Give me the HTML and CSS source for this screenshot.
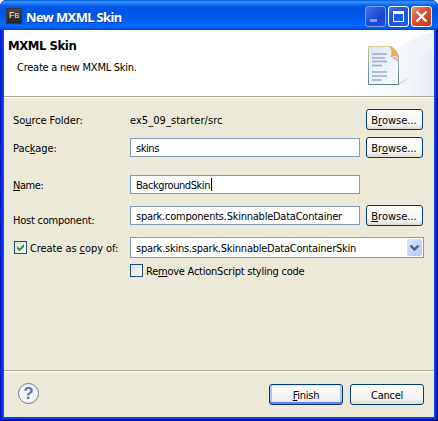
FILE: index.html
```
<!DOCTYPE html>
<html lang="en">
<head>
<meta charset="utf-8">
<title>New MXML Skin</title>
<link rel="stylesheet" href="styles.css">
</head>
<body>
<div class="window">
  <div class="titlebar">
    <span class="app-icon">F<small>B</small></span>
    <span class="window-title">New MXML Skin</span>
    <div class="controls">
      <span class="control minimize"><svg width="19" height="19"><path d="M4 12h7v3H4z" fill="#7f9ff1"/></svg></span>
      <span class="control"><svg width="19" height="19"><path d="M4 4h11v11H4zM5 7v7h9V7z" fill="#fff" fill-rule="evenodd"/></svg></span>
      <span class="control close"><svg width="19" height="19"><path d="M4.5 4.5l10 10M14.5 4.5l-10 10" stroke="#fff" stroke-width="2.3"/></svg></span>
    </div>
  </div>
  <div class="header">
    <div class="heading">
      <h1>MXML Skin</h1>
      <p>Create a new MXML Skin.</p>
    </div>
    <svg class="banner" width="80" height="66" viewBox="0 0 80 66">
      <defs>
        <linearGradient id="haze" x1="0" y1="0" x2="1" y2="0"><stop offset="0" stop-color="#fff"/><stop offset="1" stop-color="#e3eaf7"/></linearGradient>
        <linearGradient id="paper" x1="0" y1="0" x2="1" y2="1"><stop offset="0" stop-color="#dbe6f6"/><stop offset="1" stop-color="#fbfdff"/></linearGradient>
        <linearGradient id="edge" x1="0" y1="0" x2="0" y2="1"><stop offset="0" stop-color="#d9ca9b"/><stop offset=".5" stop-color="#8fa5a5"/><stop offset="1" stop-color="#5e8289"/></linearGradient>
        <linearGradient id="shade" x1="0" y1="0" x2="1" y2="0"><stop offset="0" stop-color="#c4c3d2"/><stop offset="1" stop-color="#e9edf7" stop-opacity="0"/></linearGradient>
      </defs>
      <path d="M0 66Q18 22 80 1V66z" fill="url(#haze)" opacity=".65"/>
      <path d="M36 66Q54 32 80 21V66z" fill="url(#haze)" opacity=".6"/>
      <path d="M44 54L61 42L52 51L44 55z" fill="url(#shade)"/>
      <path d="M14.500 16.500H36L44.500 27V54.500H14.500z" fill="url(#paper)" stroke="url(#edge)"/>
      <path d="M36 16Q43 19 45 28Q42 24 37 27Q39 22 36 16z" fill="#efac4f" stroke="#d99a4b" stroke-width=".5"/>
      <path d="M38 28Q42 25 44 29V32z" fill="#bec8d8"/>
      <path d="M18 24h15M18 28h13M18 31.500h15M18 35.500h10M18 42h15M18 46h15M18 50h10" stroke="#9caccd" stroke-width="1.500"/>
    </svg>
  </div>
  <div class="form">
    <div class="row source">
      <label class="label"><span class="text">So<u>u</u>rce Folder:</span></label>
      <span class="value"><span class="text path">ex5_09_starter/src</span></span>
      <span class="button browse"><span class="text">B<u>r</u>owse...</span></span>
    </div>
    <div class="row package">
      <label class="label"><span class="text">Pac<u>k</u>age:</span></label>
      <span class="field"><span class="text typed">skins</span></span>
      <span class="button browse"><span class="text">Br<u>o</u>wse...</span></span>
    </div>
    <div class="row name">
      <label class="label"><span class="text short"><u>N</u>ame:</span></label>
      <span class="field"><span class="text typed">BackgroundSkin</span><i class="caret"></i></span>
    </div>
    <div class="row host">
      <label class="label"><span class="text component">Host component:</span></label>
      <span class="field"><span class="text">spark.components.SkinnableDataContainer</span></span>
      <span class="button browse"><span class="text"><u>B</u>rowse...</span></span>
    </div>
    <div class="row copy">
      <label class="label"><span class="checkbox"><svg width="11" height="11"><path d="M2 4l2.500 2.500L9 2v3L4.500 9.300L2 7z" fill="#21a121"/></svg></span><span class="text">Create as <u>c</u>opy of:</span></label>
      <span class="field combo"><span class="text">spark.skins.spark.SkinnableDataContainerSkin</span>
        <span class="arrow"><svg width="15" height="17"><path d="M3.500 6.500l4 4l4-4" fill="none" stroke="#4d6185" stroke-width="2.400"/></svg></span>
      </span>
    </div>
    <div class="row remove">
      <span class="checkbox"></span><span class="text">Re<u>m</u>ove ActionScript styling code</span>
    </div>
  </div>
  <div class="footer">
    <span class="help">?</span>
    <span class="button action default"><span class="text"><u>F</u>inish</span></span>
    <span class="button action"><span class="text">Cancel</span></span>
  </div>
</div>
</body>
</html>
```
FILE: styles.css
```
* { box-sizing: border-box; }
body {
  margin: 0;
  background: #fff;
  color: #000;
  font: 11px/13px "DejaVu Sans Condensed", "DejaVu Sans", sans-serif;
  font-stretch: condensed;
}
svg { display: block; }
span { white-space: nowrap; }
u { text-decoration: underline; text-underline-offset: 1px; text-decoration-thickness: 1px; text-decoration-skip-ink: none; }
.window {
  width: 438px;
  height: 421px;
  display: flex;
  flex-direction: column;
  padding: 0 4px 4px;
  border-radius: 7px 7px 0 0;
  overflow: hidden;
  background: #0831d9;
  box-shadow: inset 1px 0 #0019cf, inset -1px 0 #00138c, inset 0 -1px #00138c, inset 3px 0 #0831d9, inset -2px 0 #001ea0, inset 0 -2px #001ea0, inset 4px 0 #0855e8, inset -4px 0 #0545e4, inset 0 -4px #0545e4;
}
.titlebar {
  height: 30px;
  flex: none;
  margin: 0 -4px;
  padding: 0 6px;
  display: flex;
  align-items: center;
  background: linear-gradient(#0058d8 0, #3c96ff 2px, #1475f5 4px, #0356e3 7px, #0054e3 12px, #005cf0 18px, #0066ff 24px, #0066fc 27px, #0045cf 30px);
}
.app-icon {
  width: 16px;
  height: 16px;
  margin: 2px 4px 0 0;
  display: flex;
  align-items: baseline;
  justify-content: center;
  background: linear-gradient(#4c4645, #262223);
  border: 1px solid #383334;
  color: #eee;
  font: 9px/13px "Liberation Sans", sans-serif;
}
.app-icon small { font-size: 7px; }
.window-title {
  color: #fff;
  font: bold 13px/18px "Noto Sans", sans-serif;
  letter-spacing: -0.65px;
  text-shadow: 1px 1px #10379c;
  margin-top: 4px;
}
.controls { display: flex; gap: 2px; margin: 3px 0 0 auto; }
.control {
  width: 21px;
  height: 21px;
  border: 1px solid #fff;
  border-radius: 3px;
  background: radial-gradient(circle at 80% 90%, #1862f0, #2451d9 65%, #4d7df0);
}
.minimize { border-color: #799bee; background: linear-gradient(135deg, #4670e6, #1a45ce 65%, #1d55e0); }
.close { background: linear-gradient(135deg, #f09578, #e0502e 40%, #c53a16); }
.header {
  height: 68px;
  flex: none;
  display: flex;
  justify-content: space-between;
  background: #fff;
  border-bottom: 1px solid #fff;
  box-shadow: inset 0 -1px #aca899;
}
.heading { padding: 8px 0 0 4px; }
h1 { margin: 0; font: bold 13px/16px "DejaVu Sans Condensed", "DejaVu Sans", sans-serif; font-stretch: condensed; letter-spacing: -0.45px; }
p { margin: 7px 0 0 9px; letter-spacing: -0.25px; }
.form { flex: 1; background: #ece9d8; padding: 11px 10px 0 9px; }
.text { padding-top: 1px; letter-spacing: -0.24px; }
.row { height: 21px; display: flex; align-items: center; }
.package { margin-top: 7px; }
.name { margin-top: 16px; }
.host { margin-top: 10px; }
.copy { margin-top: 11px; }
.remove { margin: 6px 0 0 117px; height: 13px; }
.label { width: 117px; display: flex; align-items: center; }
.label .text { letter-spacing: -0.08px; }
.label .short { letter-spacing: -0.45px; }
.label .component { letter-spacing: -0.24px; }
.host .label { padding-top: 9px; }
.value, .field { width: 230px; display: flex; }
.path { letter-spacing: 0.06px; }
.field {
  height: 19px;
  padding: 0 0 0 5px;
  align-items: center;
  background: #fff;
  border: 1px solid #7f9db9;
}
.typed { letter-spacing: -0.43px; }
.caret { width: 1px; height: 13px; background: #000; margin-left: 1px; }
.button {
  height: 21px;
  display: flex;
  align-items: center;
  justify-content: center;
  border: 1px solid #003c74;
  border-radius: 3px;
  background: linear-gradient(#fff, #f4f3ee 75%, #dedbd0);
}
.browse { width: 57px; margin-left: 6px; }
.browse .text { letter-spacing: 0; margin-right: 1px; }
.checkbox {
  width: 13px;
  height: 13px;
  flex: none;
  margin-right: 3px;
  border: 1px solid #1c5180;
  background: linear-gradient(135deg, #dcdcd7, #fff);
}
.label .checkbox { margin-left: 1px; }
.combo { width: 294px; height: 21px; padding-right: 1px; }
.arrow {
  width: 15px;
  height: 17px;
  margin-left: auto;
  border-radius: 2px;
  background: linear-gradient(135deg, #dce6fd, #b4c8f6);
}
.footer {
  height: 47px;
  flex: none;
  display: flex;
  align-items: flex-start;
  padding: 12px 10px 0 14px;
  background: #ece9d8;
  border-top: 1px solid #aca899;
  box-shadow: inset 0 1px #fff;
  gap: 7px;
}
.footer .button { margin-top: 1px; }
.help {
  width: 21px;
  height: 21px;
  margin-right: auto;
  border: 1.500px solid #6b7d9e;
  border-radius: 50%;
  background: #f3f4f7;
  color: #64799f;
  text-align: center;
  font: bold 17px/19px "Liberation Sans", sans-serif;
}
.action { width: 74px; }
.default { box-shadow: inset 0 1px #cee7ff, inset 0 -2px #6982ee, inset 2px 0 #a9c4f5, inset -2px 0 #a9c4f5; }
```
